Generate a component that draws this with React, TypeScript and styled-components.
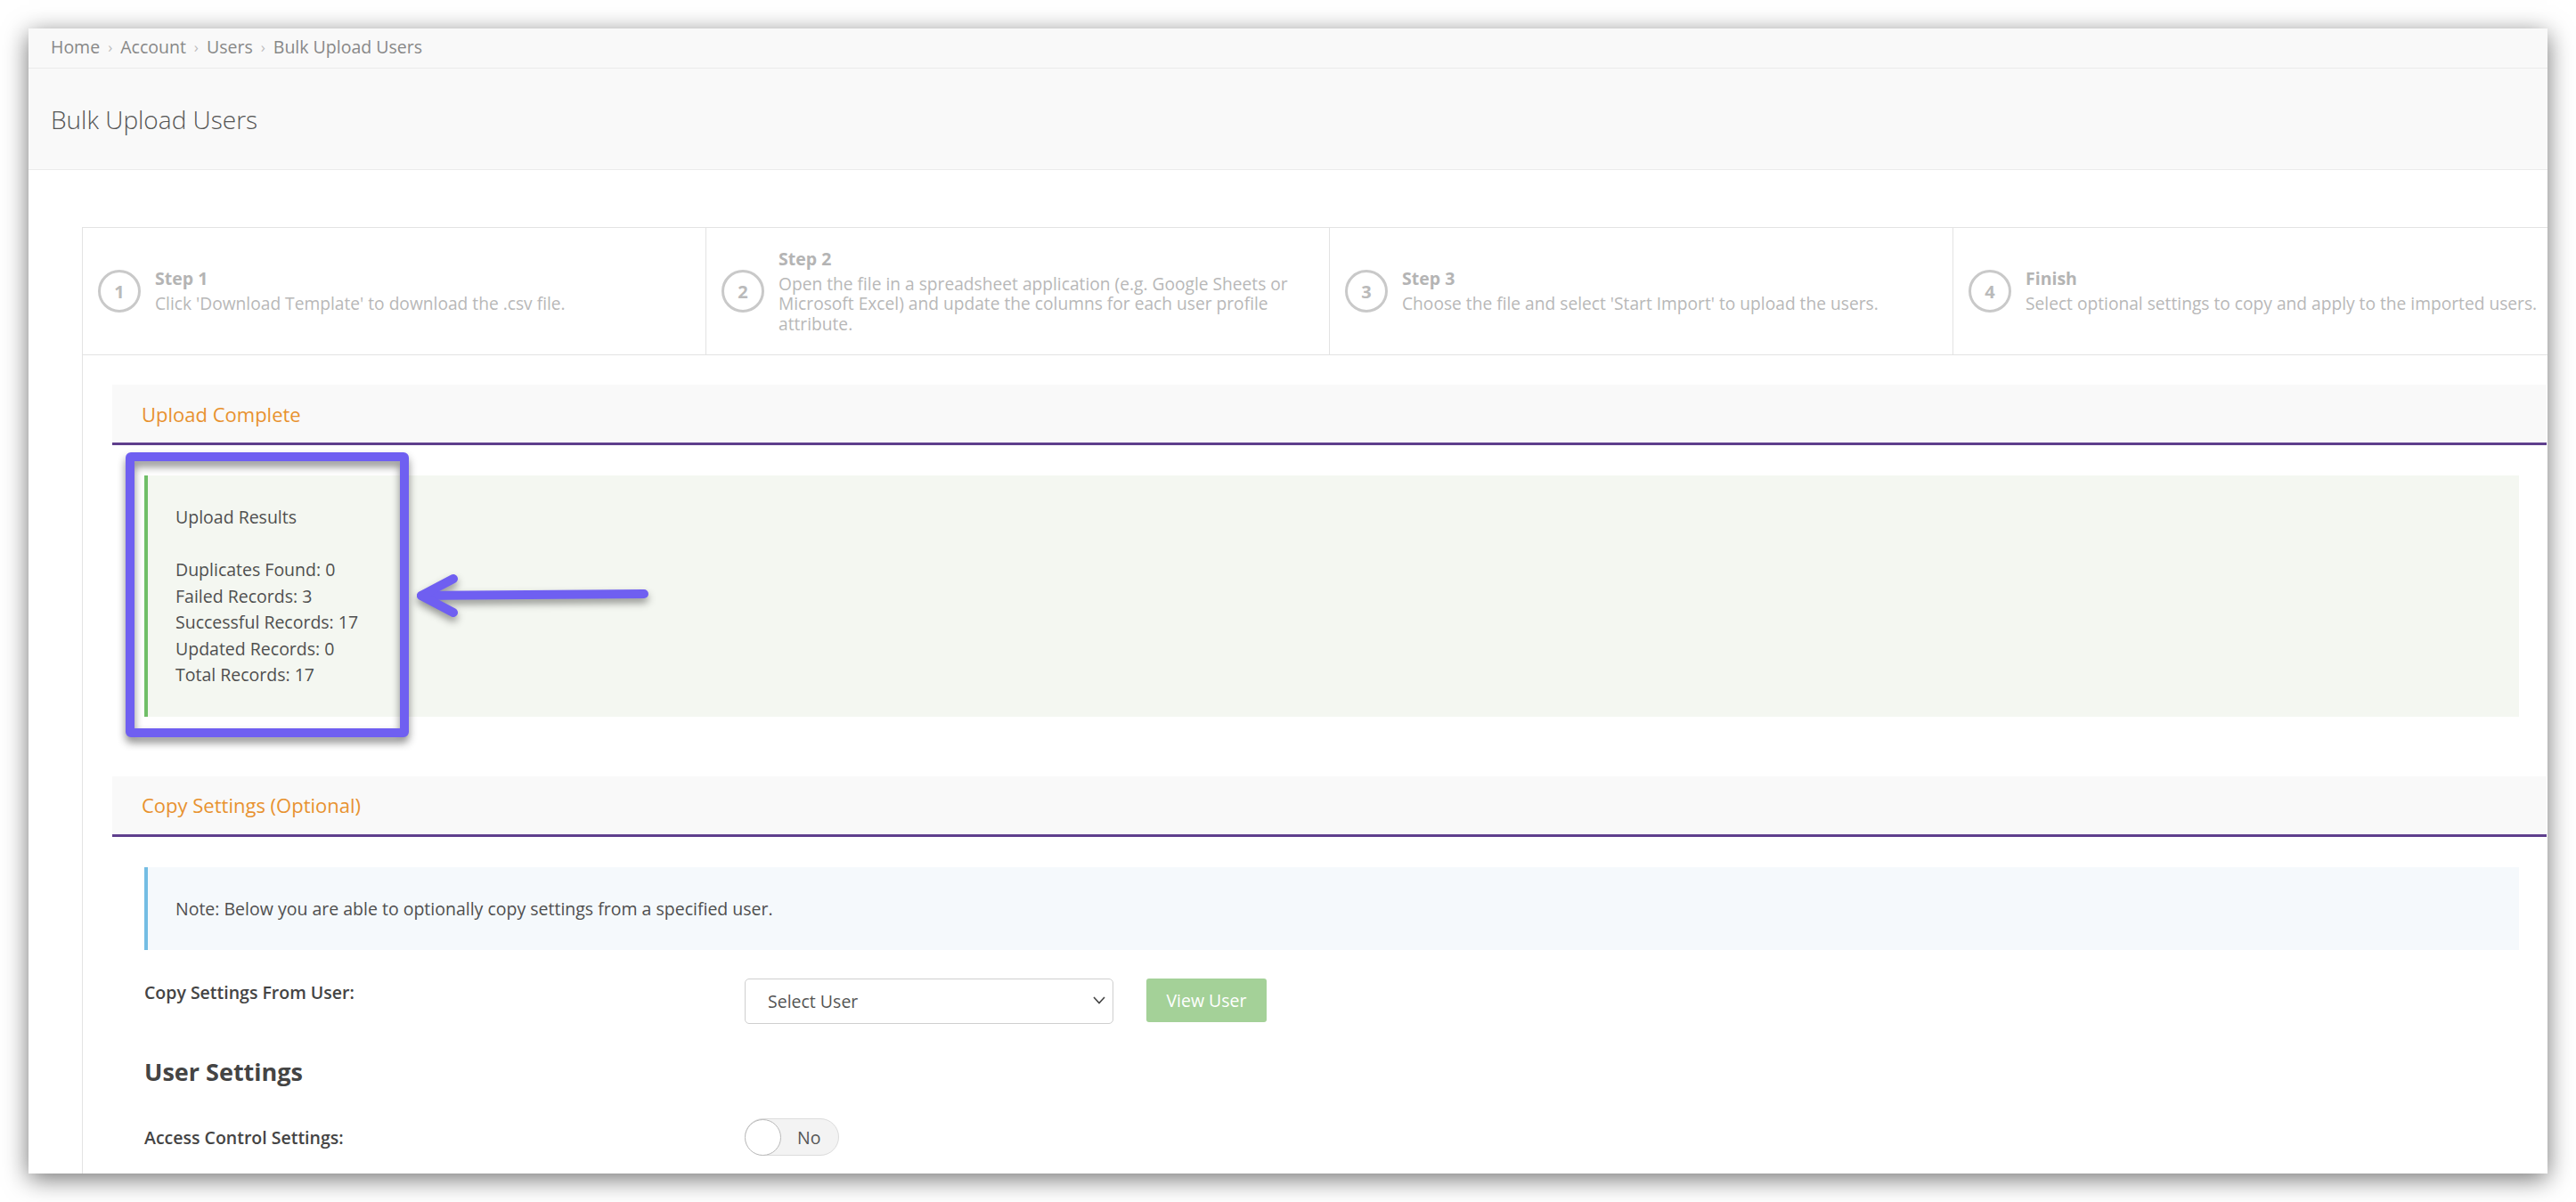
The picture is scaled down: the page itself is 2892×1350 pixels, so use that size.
import React from 'react';
import styled, { createGlobalStyle } from 'styled-components';

const GlobalStyle = createGlobalStyle`
    html, body {
        margin: 0;
        padding: 0;
        background: #ffffff;
    }
    body {
        font-family: "Open Sans", "Liberation Sans", sans-serif;
        color: #555;
    }
    * {
        box-sizing: border-box;
    }
`;

const Stage = styled.div`
    width: 2892px;
    height: 1350px;
    padding: 32px 0 0 32px;
    overflow: hidden;
`;

const Window = styled.div`
    position: relative;
    width: 2828px;
    height: 1286px;
    background: #fff;
    overflow: hidden;
    box-shadow: 0 6px 26px rgba(0, 0, 0, 0.55);
`;

const Breadcrumbs = styled.nav`
    display: flex;
    align-items: center;
    height: 45px;
    padding: 0 0 4px 25px;
    background: #f9f9f9;
    border-bottom: 1px solid #ebebeb;
    font-size: 19.5px;
    color: #888;
`;

const Crumb = styled.span`
    color: #888;
`;

const Sep = styled.span`
    margin: 0 9px;
    color: #bdbdbd;
    font-size: 17px;
`;

const TitleBar = styled.header`
    display: flex;
    align-items: center;
    height: 114px;
    padding-left: 25px;
    background: #f9f9f9;
    border-bottom: 1px solid #ebebeb;
`;

const Title = styled.h1`
    margin: 0;
    font-size: 28px;
    font-weight: 300;
    color: #555;
`;

const Body = styled.main`
    padding: 64px 0 0 60px;
`;

const Wizard = styled.section`
    width: 2800px;
    border-top: 1px solid #e3e3e3;
    border-left: 1px solid #e3e3e3;
`;

const Steps = styled.div`
    display: grid;
    grid-template-columns: repeat(4, 700px);
    height: 143px;
    border-bottom: 1px solid #e3e3e3;
`;

const Step = styled.div`
    display: flex;
    align-items: center;
    gap: 16px;
    padding: 0 28px 0 17px;
    border-right: 1px solid #e3e3e3;
`;

const StepNumber = styled.div`
    flex: 0 0 48px;
    display: flex;
    align-items: center;
    justify-content: center;
    width: 48px;
    height: 48px;
    border: 3px solid #c9c9c9;
    border-radius: 50%;
    font-size: 20px;
    font-weight: 700;
    color: #bababa;
`;

const StepText = styled.div`
    display: flex;
    flex-direction: column;
`;

const StepTitle = styled.div`
    font-size: 19.5px;
    font-weight: 700;
    line-height: 24px;
    margin-bottom: 5px;
    color: #b4b4b4;
`;

const StepDesc = styled.div`
    font-size: 19.2px;
    line-height: 22.5px;
    color: #b8b8b8;
`;

const WizardBody = styled.div`
    padding: 33px 33px 0 33px;
`;

const Panel = styled.div`
    margin-bottom: 33px;
`;

const PanelHeading = styled.div`
    display: flex;
    align-items: center;
    height: 68px;
    padding-left: 33px;
    background: #f9f9f9;
    border-bottom: 3px solid #5f3f8d;
    font-size: 22px;
    color: #e8922f;
`;

const PanelBody = styled.div`
    padding: 34px 31px 34px 36px;
`;

const Callout = styled.div<{ $tone: 'success' | 'info' }>`
    padding: 32px 31px;
    background: ${(p) => (p.$tone === 'success' ? '#f4f7f1' : '#f5f9fc')};
    border-left: 4px solid ${(p) => (p.$tone === 'success' ? '#70be68' : '#74bde3')};
    font-size: 19.5px;
    line-height: 29.5px;
    color: #4f4f4f;
`;

const FormRow = styled.div`
    display: flex;
    align-items: flex-start;
    margin-top: 32px;
`;

const FieldLabel = styled.label`
    flex: 0 0 674px;
    padding-top: 1px;
    font-size: 19.5px;
    font-weight: 600;
    line-height: 29.5px;
    color: #444;
`;

const SelectBox = styled.div`
    position: relative;
    display: flex;
    align-items: center;
    width: 414px;
    height: 51px;
    padding-left: 25px;
    border: 1px solid #cfcfcf;
    border-radius: 5px;
    background: #fff;
    font-size: 19.5px;
    color: #555;
`;

const Chevron = styled.svg`
    position: absolute;
    right: 8px;
    top: 19px;
`;

const ViewButton = styled.button`
    width: 135px;
    height: 49px;
    margin-left: 37px;
    border: none;
    border-radius: 3px;
    background: #a4d198;
    color: #fff;
    font-family: inherit;
    font-size: 19.5px;
`;

const SectionTitle = styled.h3`
    margin: 36px 0 0 0;
    font-size: 27px;
    font-weight: 700;
    line-height: 36px;
    color: #444;
`;

const ToggleRow = styled.div`
    display: flex;
    align-items: center;
    margin-top: 34px;
`;

const Toggle = styled.div`
    display: flex;
    align-items: center;
    width: 106px;
    height: 42px;
    border: 1px solid #dcdcdc;
    border-radius: 21px;
    background: #f3f3f3;
    font-size: 19.5px;
    color: #555;
`;

const Knob = styled.span`
    width: 41px;
    height: 41px;
    margin-left: -1px;
    border: 1px solid #b9b9b9;
    border-radius: 50%;
    background: #fff;
`;

const ToggleText = styled.span`
    margin-left: 18px;
`;

/* callout annotation drawn over the page */
const Highlight = styled.div`
    position: absolute;
    left: 109px;
    top: 476px;
    width: 318px;
    height: 320px;
    border: 10px solid #6f5ff1;
    border-radius: 6px;
    filter: drop-shadow(0 6px 5px rgba(0, 0, 0, 0.45));
    pointer-events: none;
`;

const Arrow = styled.svg`
    position: absolute;
    left: 425px;
    top: 600px;
    filter: drop-shadow(0 5px 4px rgba(0, 0, 0, 0.4));
    overflow: visible;
`;

const steps = [
    { n: 1, title: 'Step 1', text: "Click 'Download Template' to download the .csv file." },
    {
        n: 2,
        title: 'Step 2',
        text: 'Open the file in a spreadsheet application (e.g. Google Sheets or Microsoft Excel) and update the columns for each user profile attribute.',
    },
    { n: 3, title: 'Step 3', text: "Choose the file and select 'Start Import' to upload the users." },
    { n: 4, title: 'Finish', text: 'Select optional settings to copy and apply to the imported users.' },
];

const results = [
    'Duplicates Found: 0',
    'Failed Records: 3',
    'Successful Records: 17',
    'Updated Records: 0',
    'Total Records: 17',
];

export default function App() {
    const crumbs = ['Home', 'Account', 'Users', 'Bulk Upload Users'];

    return (
        <Stage>
            <GlobalStyle />
            <Window>
                <Breadcrumbs>
                    {crumbs.map((c, i) => (
                        <React.Fragment key={c}>
                            {i > 0 && <Sep>›</Sep>}
                            <Crumb>{c}</Crumb>
                        </React.Fragment>
                    ))}
                </Breadcrumbs>
                <TitleBar>
                    <Title>Bulk Upload Users</Title>
                </TitleBar>
                <Body>
                    <Wizard>
                        <Steps>
                            {steps.map((s) => (
                                <Step key={s.n}>
                                    <StepNumber>{s.n}</StepNumber>
                                    <StepText>
                                        <StepTitle>{s.title}</StepTitle>
                                        <StepDesc>{s.text}</StepDesc>
                                    </StepText>
                                </Step>
                            ))}
                        </Steps>
                        <WizardBody>
                            <Panel>
                                <PanelHeading>Upload Complete</PanelHeading>
                                <PanelBody>
                                    <Callout $tone="success">
                                        Upload Results
                                        <br />
                                        <br />
                                        {results.map((r) => (
                                            <div key={r}>{r}</div>
                                        ))}
                                    </Callout>
                                </PanelBody>
                            </Panel>
                            <Panel>
                                <PanelHeading>Copy Settings (Optional)</PanelHeading>
                                <PanelBody>
                                    <Callout $tone="info">
                                        Note: Below you are able to optionally copy settings from a specified user.
                                    </Callout>
                                    <FormRow>
                                        <FieldLabel>Copy Settings From User:</FieldLabel>
                                        <SelectBox>
                                            Select User
                                            <Chevron width="14" height="9" viewBox="0 0 14 9">
                                                <polyline points="1,1 7,7.5 13,1" fill="none" stroke="#444" strokeWidth="1.6" />
                                            </Chevron>
                                        </SelectBox>
                                        <ViewButton>View User</ViewButton>
                                    </FormRow>
                                    <SectionTitle>User Settings</SectionTitle>
                                    <ToggleRow>
                                        <FieldLabel>Access Control Settings:</FieldLabel>
                                        <Toggle>
                                            <Knob />
                                            <ToggleText>No</ToggleText>
                                        </Toggle>
                                    </ToggleRow>
                                </PanelBody>
                            </Panel>
                        </WizardBody>
                    </Wizard>
                </Body>
                <Highlight />
                <Arrow width="280" height="80" viewBox="0 0 280 80">
                    <g fill="none" stroke="#6f5ff1" strokeWidth="10" strokeLinecap="round" strokeLinejoin="round">
                        <line x1="16" y1="37" x2="266" y2="35" />
                        <polyline points="52,18 16,37 52,56" />
                    </g>
                </Arrow>
            </Window>
        </Stage>
    );
}
